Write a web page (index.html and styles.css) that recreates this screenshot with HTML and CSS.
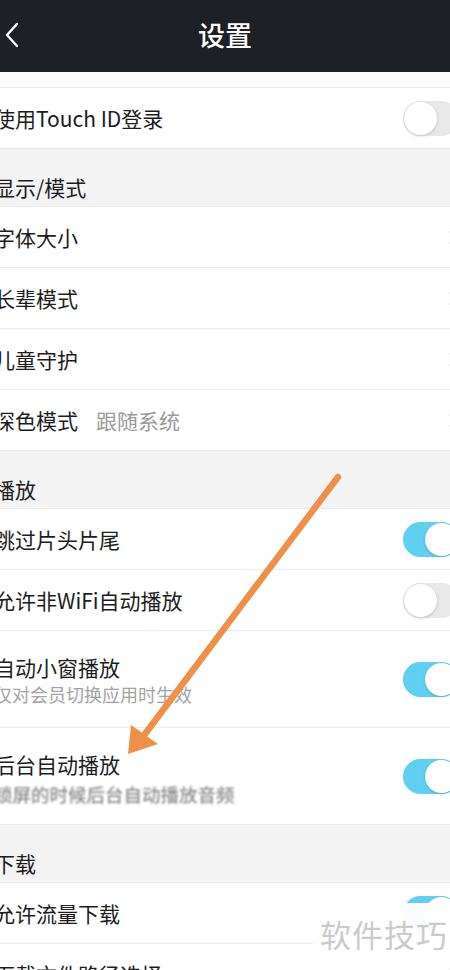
FILE: index.html
```html
<!DOCTYPE html>
<html lang="zh-CN">
<head>
<meta charset="utf-8">
<title>设置</title>
<link rel="stylesheet" href="styles.css">
</head>
<body>
<div class="page">
  <header class="topbar">
    <svg class="back" width="14" height="26" viewBox="0 0 14 26"><path d="M12 2 L2 13 L12 24" fill="none" stroke="#fff" stroke-width="2.4" stroke-linecap="round" stroke-linejoin="round"/></svg>
    <h1 class="title">设置</h1>
  </header>

  <div class="list">
    <div class="strip"></div>
    <div class="row">
      <span class="label">使用Touch ID登录</span>
      <span class="toggle off"><span class="knob"></span></span>
    </div>

    <div class="section">显示/模式</div>
    <div class="row chev-row"><span class="label">字体大小</span><span class="chev"></span></div>
    <div class="row chev-row"><span class="label">长辈模式</span><span class="chev"></span></div>
    <div class="row chev-row"><span class="label">儿童守护</span><span class="chev"></span></div>
    <div class="row chev-row"><span class="label">深色模式<span class="value">跟随系统</span></span><span class="chev"></span></div>

    <div class="section">播放</div>
    <div class="row">
      <span class="label">跳过片头片尾</span>
      <span class="toggle on"><span class="knob"></span></span>
    </div>
    <div class="row">
      <span class="label">允许非WiFi自动播放</span>
      <span class="toggle off"><span class="knob"></span></span>
    </div>
    <div class="row tall">
      <div class="texts">
        <span class="label">自动小窗播放</span>
        <span class="sub">仅对会员切换应用时生效</span>
      </div>
      <span class="toggle on"><span class="knob"></span></span>
    </div>
    <div class="row tall">
      <div class="texts">
        <span class="label">后台自动播放</span>
        <span class="sub blur">锁屏的时候后台自动播放音频</span>
      </div>
      <span class="toggle on"><span class="knob"></span></span>
    </div>

    <div class="section">下载</div>
    <div class="row">
      <span class="label">允许流量下载</span>
      <span class="toggle on"><span class="knob"></span></span>
    </div>
    <div class="row chev-row">
      <span class="label">下载文件路径选择</span><span class="chev"></span>
    </div>
  </div>

  <svg class="arrow" width="450" height="970" viewBox="0 0 450 970">
    <line x1="338" y1="477" x2="142" y2="738" stroke="#ef9048" stroke-width="6.5" stroke-linecap="round"/>
    <polygon points="128,754 131,725 158,744" fill="#ef9048"/>
  </svg>

  <div class="watermark">软件技巧</div>
</div>
</body>
</html>
```

FILE: styles.css
```css
* { box-sizing: border-box; }
html, body { margin: 0; padding: 0; }
body {
  width: 450px;
  height: 970px;
  overflow: hidden;
  background: #fff;
  font-family: "Noto Sans CJK SC", "Noto Sans", sans-serif;
  color: #1c1c1c;
}
.page { position: relative; width: 450px; height: 970px; overflow: hidden; }

.topbar {
  height: 72px;
  background: #1e2028;
  display: flex;
  align-items: center;
  justify-content: center;
  position: relative;
}
.back { position: absolute; left: 5px; top: 22px; }
.title {
  margin: 0;
  font-size: 27px;
  font-weight: 500;
  color: #fff;
  line-height: 1;
  margin-top: -4px;
}

.list {
  width: 470px;
  margin-left: -6px;
}
.strip { height: 16px; background: #fcfcfc; border-bottom: 1px solid #e9e9e9; }

.row {
  height: 61px;
  display: flex;
  align-items: center;
  justify-content: space-between;
  border-bottom: 1px solid #ebebeb;
  background: #fff;
  padding-right: 5px;
}
.row.tall { height: 97px; }
.row.chev-row { padding-right: 10px; }

.label {
  font-size: 21px;
  line-height: 28px;
  color: #1c1c1c;
  white-space: nowrap;
  display: flex;
  align-items: center;
}
.value { color: #9a9a9a; margin-left: 18px; }

.texts { display: flex; flex-direction: column; align-self: flex-start; padding-top: 22px; }
.sub {
  font-size: 18px;
  line-height: 26px;
  color: #a3a3a3;
  white-space: nowrap;
}
.sub.blur {
  filter: blur(1.3px);
  margin-top: 3px;
  color: #8c8c8c;
  font-size: 18.5px;
  font-weight: 500;
}

.section {
  height: 58px;
  background: #f4f4f4;
  border-bottom: 1px solid #eaeaea;
  font-size: 21px;
  line-height: 28px;
  padding-top: 24px;
  color: #1c1c1c;
}

.chev {
  width: 9px; height: 9px;
  border-top: 1.5px solid #e2e2e2;
  border-right: 1.5px solid #e2e2e2;
  transform: rotate(45deg);
}

.toggle {
  width: 56px;
  height: 35px;
  border-radius: 18px;
  display: flex;
  align-items: center;
  padding: 0 1px;
  flex: none;
}
.toggle.on { background: #5fd0ef; justify-content: flex-end; }
.toggle.off { background: #e8e8e8; justify-content: flex-start; }
.knob {
  width: 33px;
  height: 33px;
  border-radius: 50%;
  background: #fff;
  box-shadow: 0 1px 3px rgba(0,0,0,0.18);
}

.arrow { position: absolute; left: 0; top: 0; pointer-events: none; }

.watermark {
  position: absolute;
  left: 313px;
  top: 903px;
  width: 137px;
  height: 62px;
  background: rgba(255,255,255,0.96);
  color: #cbcbcb;
  font-size: 31px;
  line-height: 62px;
  padding-left: 7px;
  letter-spacing: 1px;
  white-space: nowrap;
}
```
